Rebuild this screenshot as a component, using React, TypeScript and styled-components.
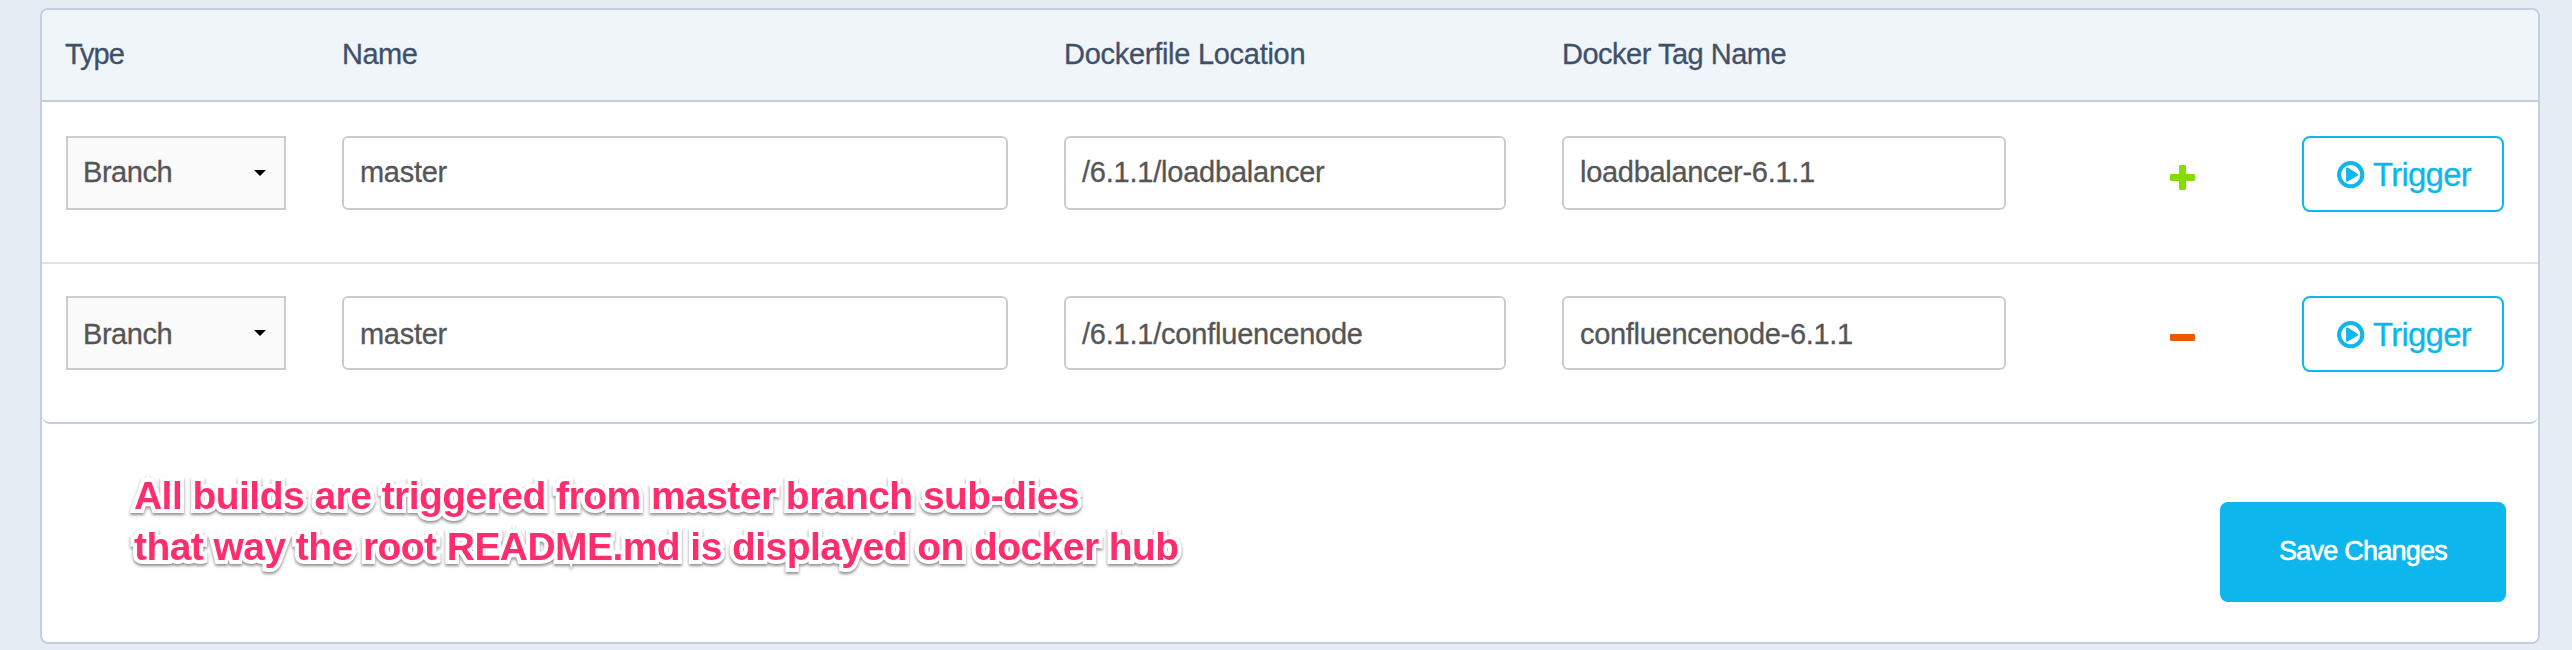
import React from "react";
import styled, { createGlobalStyle } from "styled-components";

const GlobalStyle = createGlobalStyle`
  *, *::before, *::after { box-sizing: border-box; }
  html { background: #e5ecf4; }
  body { margin: 0; font-family: "Liberation Sans", Arial, sans-serif; }
  button, input { font-family: inherit; }
`;

const Page = styled.main`
  height: 650px;
  padding: 8px 32px 6px 40px;
  overflow: hidden;
  background: #e5ecf4;
`;

const Panel = styled.section`
  height: 636px;
  border: 2px solid #c4cee0;
  border-radius: 8px;
  background: #fff;
`;

const columns = "276px 722px 498px 500px 240px 1fr";

const HeaderRow = styled.div`
  display: grid;
  grid-template-columns: ${columns};
  height: 92px;
  padding-left: 24px;
  border-bottom: 2px solid #c4cee0;
  border-radius: 6px 6px 0 0;
  background: #f0f5fa;
`;

const Heading = styled.div<{ $spacing: number }>`
  padding-top: 27px;
  font-size: 29px;
  line-height: 34px;
  letter-spacing: ${(p) => p.$spacing}px;
  color: #3f5069;
  -webkit-text-stroke: 0.3px currentColor;

  &:first-child { margin-left: -1px; }
`;

const Rows = styled.div`
  border-bottom: 2px solid #c4cfde;
  border-radius: 0 0 8px 8px;
`;

const BuildRow = styled.div<{ $last?: boolean }>`
  display: grid;
  grid-template-columns: ${columns};
  align-items: start;
  height: ${(p) => (p.$last ? 158 : 162)}px;
  padding: ${(p) => (p.$last ? 32 : 34)}px 0 0 24px;
  border-bottom: ${(p) => (p.$last ? "none" : "2px solid #e3e3e3")};
`;

const SelectBox = styled.div<{ $drop: number }>`
  display: flex;
  justify-content: space-between;
  width: 220px;
  height: 74px;
  padding: ${(p) => 17 + p.$drop}px 18px 0 15px;
  border: 2px solid #ccc;
  background: #fafafa;
  font-size: 29px;
  line-height: 34px;
  letter-spacing: -0.45px;
  color: #555;
  -webkit-text-stroke: 0.3px currentColor;
`;

const Caret = styled.svg<{ $drop: number }>`
  width: 12px;
  height: 6px;
  margin-top: ${(p) => 15 - p.$drop}px;
  fill: #000;
`;

const Field = styled.input<{ $width: number; $drop: number; $spacing: number }>`
  width: ${(p) => p.$width}px;
  height: 74px;
  padding: ${(p) => p.$drop * 2}px 16px 2px;
  border: 2px solid #ccc;
  border-radius: 6px;
  outline: none;
  background: #fff;
  font-size: 29px;
  letter-spacing: ${(p) => p.$spacing}px;
  color: #555;
  -webkit-text-stroke: 0.3px currentColor;
`;

const IconButton = styled.button`
  display: flex;
  width: 25px;
  height: 25px;
  margin: 29px 0 0 108px;
  padding: 0;
  border: 0;
  background: none;
`;

const TriggerButton = styled.button`
  display: flex;
  align-items: flex-start;
  gap: 8px;
  width: 202px;
  height: 76px;
  padding: 0 0 0 33px;
  border: 2px solid #0db7ed;
  border-radius: 8px;
  background: #fff;
  font-size: 33px;
  line-height: 38px;
  letter-spacing: -0.75px;
  color: #0db7ed;
  -webkit-text-stroke: 0.3px currentColor;

  svg { margin-top: 23px; flex: none; }
  span { margin-top: 18px; }
`;

const Footer = styled.footer`
  display: flex;
  align-items: flex-start;
  justify-content: space-between;
  padding: 46px 32px 0 92px;
`;

const Note = styled.p`
  margin: 0;
  font-size: 39px;
  font-weight: 700;
  line-height: 51px;
  color: #ff2d6c;
  white-space: nowrap;
  -webkit-text-stroke: 8px #fff;
  paint-order: stroke fill;
  filter: drop-shadow(0 2px 1.5px rgba(0, 0, 0, 0.45));
`;

const NoteLine = styled.span<{ $spacing: number }>`
  display: block;
  letter-spacing: ${(p) => p.$spacing}px;
`;

const SaveButton = styled.button`
  width: 286px;
  height: 100px;
  margin-top: 32px;
  padding: 0 0 2px;
  border: 0;
  border-radius: 8px;
  background: #0db7ed;
  font-size: 27px;
  letter-spacing: -0.75px;
  color: #fff;
  -webkit-text-stroke: 0.6px #fff;
`;

function PlayIcon() {
  return (
    <svg width="28" height="28" viewBox="0 0 28 28" fill="none">
      <circle cx="13.7" cy="13.7" r="11.6" stroke="#0db7ed" strokeWidth="4" />
      <path
        d="M9.1 7.4c0-.8.9-1.2 1.6-.8l9.8 6.1c.8.5.8 1.5 0 2l-9.8 5.9c-.7.4-1.6 0-1.6-.8Z"
        fill="#0db7ed"
      />
    </svg>
  );
}

function AddIcon() {
  return (
    <svg width="25" height="25" viewBox="0 0 25 25" fill="#85dc00">
      <rect x="0" y="9" width="25" height="7" rx="1.3" />
      <rect x="9" y="0" width="7" height="25" rx="1.3" />
    </svg>
  );
}

function RemoveIcon() {
  return (
    <svg width="25" height="25" viewBox="0 0 25 25" fill="#f05800">
      <rect x="0" y="9" width="25" height="7" rx="1.3" />
    </svg>
  );
}

const builds = [
  { name: "master", location: "/6.1.1/loadbalancer", tag: "loadbalancer-6.1.1" },
  { name: "master", location: "/6.1.1/confluencenode", tag: "confluencenode-6.1.1" },
];

export default function App() {
  return (
    <>
      <GlobalStyle />
      <Page>
        <Panel>
          <HeaderRow>
            <Heading $spacing={-1}>Type</Heading>
            <Heading $spacing={-0.5}>Name</Heading>
            <Heading $spacing={-0.28}>Dockerfile Location</Heading>
            <Heading $spacing={-0.5}>Docker Tag Name</Heading>
          </HeaderRow>
          <Rows>
            {builds.map((build, i) => {
              const last = i === builds.length - 1;
              const drop = last ? 2 : 0;
              return (
                <BuildRow key={build.tag} $last={last}>
                  <SelectBox $drop={drop}>
                    Branch
                    <Caret $drop={drop} viewBox="0 0 12 6">
                      <path d="M0 0h12L6 6Z" />
                    </Caret>
                  </SelectBox>
                  <Field $width={666} $drop={drop} $spacing={-0.3} defaultValue={build.name} aria-label="Name" />
                  <Field $width={442} $drop={drop} $spacing={-0.22} defaultValue={build.location} aria-label="Dockerfile Location" />
                  <Field $width={444} $drop={drop} $spacing={-0.3} defaultValue={build.tag} aria-label="Docker Tag Name" />
                  <IconButton aria-label={last ? "Remove build" : "Add build"}>
                    {last ? <RemoveIcon /> : <AddIcon />}
                  </IconButton>
                  <TriggerButton>
                    <PlayIcon />
                    <span>Trigger</span>
                  </TriggerButton>
                </BuildRow>
              );
            })}
          </Rows>
          <Footer>
            <Note>
              <NoteLine $spacing={-0.54}>All builds are triggered from master branch sub-dies</NoteLine>
              <NoteLine $spacing={-0.56}>that way the root README.md is displayed on docker hub</NoteLine>
            </Note>
            <SaveButton>Save Changes</SaveButton>
          </Footer>
        </Panel>
      </Page>
    </>
  );
}
